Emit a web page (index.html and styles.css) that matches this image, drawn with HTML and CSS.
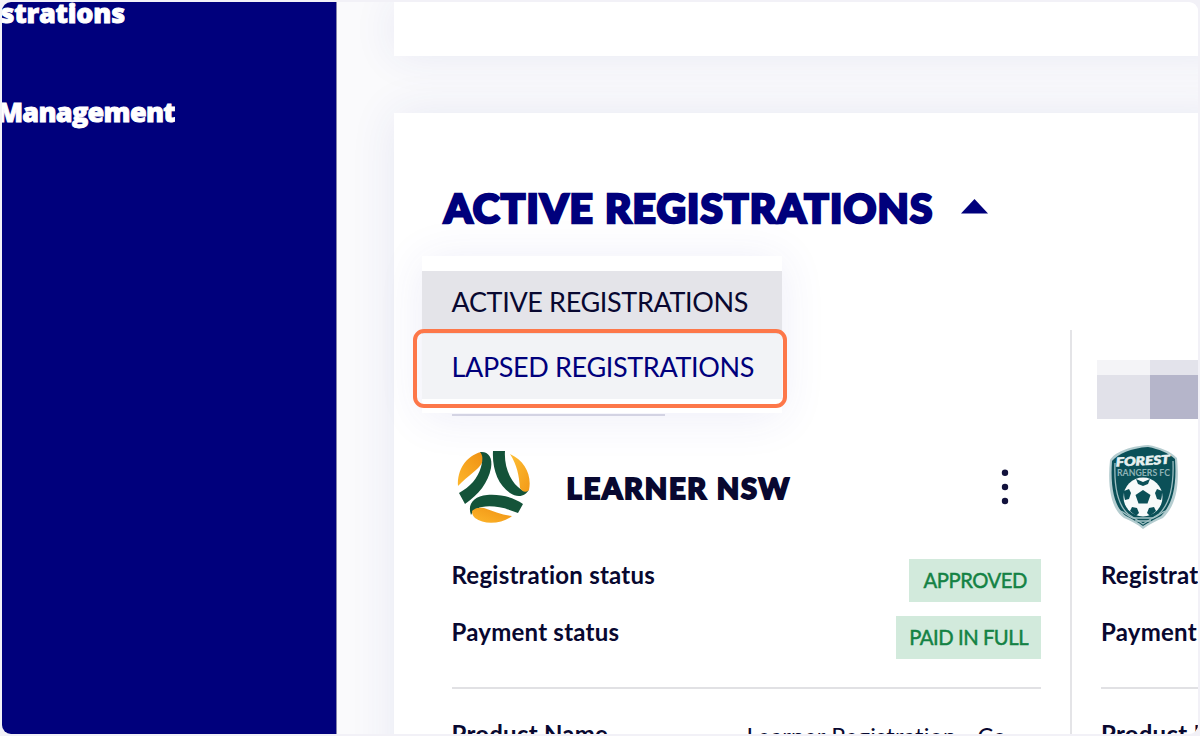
FILE: index.html
```
<!DOCTYPE html>
<html lang="en">
<head>
<meta charset="utf-8">
<title>Registrations</title>
<link rel="stylesheet" href="styles.css">
</head>
<body>
<div class="frame">
  <nav class="sidebar">
    <div class="nav-item nav-reg"><span>strations</span></div>
    <div class="nav-item nav-man"><span>Management</span></div>
  </nav>
  <main class="main">
    <section class="card card-top"></section>
    <section class="card card-main">
      <header class="title-row">
        <h1><span>ACTIVE REGISTRATIONS</span></h1>
        <svg class="caret" width="27" height="15" viewBox="0 0 27 15"><path d="M13.5 0 27 14.5H0z" fill="#00007c"/></svg>
        <div class="menu">
          <div class="option selected"><span>ACTIVE REGISTRATIONS</span></div>
          <div class="option lapsed"><span>LAPSED REGISTRATIONS</span></div>
          <div class="highlight"></div>
        </div>
      </header>
      <div class="columns">
        <article class="reg first">
          <div class="name-slot"><div class="short-rule"></div></div>
          <div class="club">
            <svg class="logo" width="74" height="74" viewBox="0 0 74 74">
              <defs>
                <linearGradient id="gold" x1="0" y1="1" x2="1" y2="0"><stop offset="0" stop-color="#fdb62b"/><stop offset="1" stop-color="#ef9012"/></linearGradient>
                <linearGradient id="gold2" x1="0" y1="0" x2="1" y2="1"><stop offset="0" stop-color="#fdbf35"/><stop offset="1" stop-color="#f39a18"/></linearGradient>
              </defs>
              <path fill="url(#gold)" d="M1 36C0 20 9 6 24 2c3 1 4 4 2 9C22 20 11 25 1 36z"/>
              <path fill="#145339" d="M23 2c8-1 13 5 11 16C31 33 22 44 8 54L2 43c11-6 19-15 22-26 2-7 2-12-1-15z"/>
              <path fill="#145339" d="M36 1h12c-1 14 4 28 13 36 4 4 8 5 11 2-3 8-12 9-19 4C41 35 35 19 36 1z"/>
              <path fill="url(#gold2)" d="M53 4c15 7 22 21 19 36-3 3-7 2-9-2-1-13-3-23-10-34z"/>
              <path fill="#145339" d="M14 65c-4-11 3-19 16-20 13-1 26 2 36 9l-5 9c-12-5-25-8-36-6-6 1-9 4-11 8z"/>
              <path fill="url(#gold)" d="M15 61c3-3 7-4 12-3 9 3 18 7 28 8-10 8-28 9-37 2-2-2-3-4-3-7z"/>
            </svg>
            <h2><span>LEARNER NSW</span></h2>
            <svg class="kebab" width="8" height="36" viewBox="0 0 8 36" fill="#12123c"><circle cx="4" cy="3.800" r="3.200"/><circle cx="4" cy="18" r="3.200"/><circle cx="4" cy="32" r="3.200"/></svg>
          </div>
          <div class="row"><span class="label l-reg">Registration status</span><span class="badge approved"><span>APPROVED</span></span></div>
          <div class="row"><span class="label l-pay">Payment status</span><span class="badge paid"><span>PAID IN FULL</span></span></div>
          <div class="product"><span class="label l-prod">Product Name</span><span class="value">Learner Registration - Co</span></div>
        </article>
        <article class="reg second">
          <div class="name-slot"><div class="mosaic"><i class="m1"></i><i class="m2"></i><i class="m3"></i><i class="m4"></i></div></div>
          <div class="club">
            <svg class="shield" width="70" height="86" viewBox="0 0 70 86">
              <path fill="#b5cdd0" d="M1 16C5 9 20 2 39 1c12 2 22 6 29 13 3 31-2 48-14 60-7 3-13 6-20 11-6-5-12-8-19-11C3 66-2 45 1 16z"/>
              <path fill="#0b5058" d="M3 17C9 10 22 4 39 3c11 2 20 6 27 12 2 29-3 46-14 57-6 3-12 6-18 10-5-4-11-7-17-10C6 64 1 45 3 17z"/>
              <path fill="none" stroke="#9dbec1" stroke-width="1.3" d="M6 19c-1 25 3 42 13 51l15 10 16-10c11-10 15-28 14-53"/>
              <text class="crest-big" x="7" y="21" transform="rotate(-3 34 20)" textLength="54" lengthAdjust="spacingAndGlyphs">FOREST</text>
              <text class="crest-small" x="8" y="32" textLength="53" lengthAdjust="spacingAndGlyphs">RANGERS FC</text>
              <circle cx="34" cy="53" r="19.500" fill="#f7fafa"/>
              <g fill="#0b5058">
                <path d="m34 46 7.500 5-3 8.500h-9l-3-8.500z"/>
                <path d="m27 35 7 3 7-3-2 5-5 2-5-2z"/>
                <path d="m15 47 5-2 2 4-2 6-4 1c-1-3-1-6-1-9z"/>
                <path d="m53 47-5-2-2 4 2 6 4 1c1-3 1-6 1-9z"/>
                <path d="m21 67 2-4 5 1 2 5-3 3z"/>
                <path d="m47 67-2-4-5 1-2 5 3 3z"/>
              </g>
              <path stroke="#a4c2c5" stroke-width="1.4" fill="none" d="M11 67c5 1 8 6 13 7h20c5-1 8-6 13-7M26 77h16"/>
            </svg>
          </div>
          <div class="row"><span class="label l-reg">Registrat</span></div>
          <div class="row"><span class="label l-pay">Payment</span></div>
          <div class="product"><span class="label l-prod">Product N</span></div>
        </article>
      </div>
    </section>
  </main>
</div>
</body>
</html>
```

FILE: styles.css
```
* { box-sizing: border-box; }
body {
  margin: 0;
  height: 736px;
  padding: 2px;
  overflow: hidden;
  background: #f2f1f7;
  font-family: Lato, "Liberation Sans", sans-serif;
  color: #080830;
}
.frame {
  display: flex;
  width: 1196px;
  height: 732px;
  overflow: hidden;
  border-radius: 9px;
  background: #fafafc;
}
.sidebar {
  flex: none;
  width: 335px;
  background: #00007c;
  border-right: 1px solid #8585ad;
  color: #fff;
}
.nav-item {
  display: flex;
  justify-content: flex-end;
  overflow: hidden;
  font-family: "Open Sans", Lato, sans-serif;
  font-size: 27px;
  line-height: 36px;
  font-weight: 800;
  white-space: nowrap;
  -webkit-text-stroke: 0.9px #fff;
}
.nav-reg { width: 123px; margin-top: -7px; letter-spacing: -0.2px; }
.nav-man { width: 173px; margin-top: 63px; letter-spacing: -0.7px; }
.main { flex: 1; min-width: 0; padding-left: 57px; }
.card { width: 840px; background: #fff; box-shadow: 0 0 44px rgba(40, 60, 160, 0.09); }
.card-top { height: 54px; margin-bottom: 57px; }
.card-main { height: 700px; padding-top: 70px; }
.title-row { position: relative; display: flex; align-items: center; height: 50px; padding-left: 50px; }
h1, h2 { margin: 0; font-weight: 900; white-space: nowrap; }
h1 { width: 517px; margin-top: 0; font-size: 40.5px; line-height: 50px; color: #00007c; letter-spacing: 1.25px; -webkit-text-stroke: 2.600px #00007c; }
.caret { margin-top: -3px; }
.menu {
  position: absolute;
  z-index: 2;
  left: 28px;
  top: 73px;
  width: 360px;
  height: 157px;
  padding: 15px 0 14px;
  background: #fff;
  box-shadow: 0 4px 44px rgba(50, 60, 180, 0.09);
}
.option { height: 63px; padding-left: 29.500px; font-size: 27px; line-height: 62px; white-space: nowrap; letter-spacing: -0.36px; }
.selected { background: #e4e4e9; }
.lapsed { height: 65px; line-height: 65px; background: #f2f3f6; color: #00007c; }
.highlight { position: absolute; left: -9px; top: 73px; width: 374px; height: 79px; border: 4px solid #fd7749; border-radius: 11px; }
.columns { display: flex; height: 450px; margin-top: 97px; }
.reg { flex: none; white-space: nowrap; }
.first { width: 678px; padding: 0 29px 0 57.500px; border-right: 2px solid #e4e4e7; }
.second { width: 150px; padding-left: 29px; }
.name-slot { height: 112px; padding-top: 84px; }
.short-rule { width: 213px; height: 2px; background: #dcdce6; }
.second .name-slot { padding-top: 30px; }
.mosaic { display: grid; grid-template-columns: 53px 60px; grid-template-rows: 15px 44px; margin-left: -4px; }
.m1 { background: #f4f4f7; }
.m2 { background: #e3e3eb; }
.m3 { background: #e1e1e9; }
.m4 { background: #b5b5ca; }
.club { display: flex; align-items: center; height: 94px; }
.logo { margin: -4px 0 0 5px; }
h2 { width: 434px; margin: -2px 0 0 36px; font-size: 29px; line-height: 36px; letter-spacing: 1.8px; -webkit-text-stroke: 1.9px #080830; }
.kebab { flex: none; margin-top: -5px; }
.shield { margin: -4px 0 0 8px; }
.row { display: flex; justify-content: space-between; align-items: center; height: 57px; }
.club + .row { margin-top: 16px; }
.label { font-size: 24px; line-height: 30px; font-weight: 700; letter-spacing: 0.23px; }
.row .label { margin-top: -12px; }
.badge { display: flex; justify-content: center; align-items: center; height: 43px; padding-bottom: 3px; background: #d2eadc; color: #148244; font-size: 22px; letter-spacing: -0.5px; -webkit-text-stroke: 0.5px #148244; }
.badge span { flex: none; transform: scaleX(0.92); }
.approved { width: 132px; }
.paid { width: 145px; }
.product { display: flex; margin-top: 21px; padding-top: 30px; border-top: 2px solid #e1e1e4; height: 80px; }
.first .l-prod { width: 295px; }
.value { font-size: 23.5px; line-height: 34px; letter-spacing: 0.15px; }
.crest-big { font: italic 900 12px Lato, sans-serif; fill: #e8f1f1; stroke: #e8f1f1; stroke-width: 0.6px; }
.crest-small { font: 700 9px Lato, sans-serif; fill: #8fb3b6; }
```
